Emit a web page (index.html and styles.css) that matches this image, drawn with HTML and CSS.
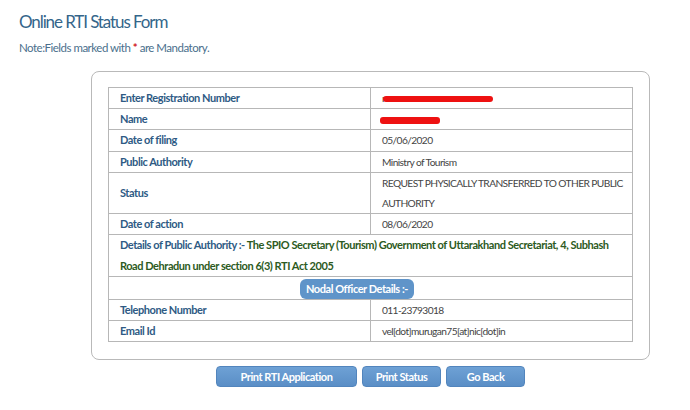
FILE: index.html
```html
<!doctype html>
<html>
  <head>
    <title>Online RTI Status Form</title>
    <link rel="stylesheet" href="styles.css">
  </head>

  <body>
    <div class="page">
      <h1 class="title">Online RTI Status Form</h1>
      <p class="note">Note:Fields marked with <span class="star">*</span> are Mandatory.</p>

      <div class="box">
        <table class="status">
          <tr>
            <td class="label">Enter Registration Number</td>
            <td class="value"><span class="hidden-text">r</span><span class="scribble scribble_long"></span></td>
          </tr>
          <tr>
            <td class="label">Name</td>
            <td class="value"><span class="scribble scribble_short"></span></td>
          </tr>
          <tr>
            <td class="label">Date of filing</td>
            <td class="value">05/06/2020</td>
          </tr>
          <tr>
            <td class="label">Public Authority</td>
            <td class="value">Ministry of Tourism</td>
          </tr>
          <tr>
            <td class="label">Status</td>
            <td class="value nowrap">REQUEST PHYSICALLY TRANSFERRED TO OTHER PUBLIC<br>AUTHORITY</td>
          </tr>
          <tr>
            <td class="label">Date of action</td>
            <td class="value">08/06/2020</td>
          </tr>
          <tr>
            <td class="label nowrap" colspan="2">Details of Public Authority :- <span class="details">The SPIO Secretary (Tourism) Government of Uttarakhand Secretariat, 4, Subhash<br>Road Dehradun under section 6(3) RTI Act 2005</span></td>
          </tr>
          <tr>
            <td class="nodal" colspan="2"><span class="nodal_btn">Nodal Officer Details :-</span></td>
          </tr>
          <tr>
            <td class="label">Telephone Number</td>
            <td class="value">011-23793018</td>
          </tr>
          <tr>
            <td class="label">Email Id</td>
            <td class="value">vel[dot]murugan75[at]nic[dot]in</td>
          </tr>
        </table>
      </div>

      <div class="actions">
        <button class="btn btn_wide">Print RTI Application</button>
        <button class="btn btn_status">Print Status</button>
        <button class="btn btn_back">Go Back</button>
      </div>
    </div>
  </body>
</html>
```

FILE: styles.css
```css
body {
  margin: 0;
  background-color: #fff;
  font-family: "Lato", sans-serif;
}

.page {
  padding: 10px 0 0 19px;
}

.title {
  margin: 0;
  font-size: 17px;
  font-weight: normal;
  line-height: 24px;
  letter-spacing: -1.1px;
  color: #34658a;
}

.note {
  margin: 7px 0 0 0;
  font-size: 11.5px;
  line-height: 14px;
  letter-spacing: -0.5px;
  color: #4a6f8c;
}

.star {
  color: #d0181e;
  font-weight: bold;
}

.box {
  width: 525px;
  margin: 16px 0 0 72px;
  padding: 15px 16px 17px 16px;
  border: 1px solid #b9b9b9;
  border-radius: 8px;
}

.status {
  width: 100%;
  border-collapse: collapse;
  table-layout: fixed;
  border: 1.5px solid #a9a9a9;
}

.status td {
  border: 1px solid #b7b7b7;
  padding: 0 11px;
  line-height: 20.2px;
  vertical-align: middle;
}

.nowrap {
  white-space: nowrap;
}

.label {
  font-size: 11px;
  font-weight: bold;
  letter-spacing: -0.45px;
  color: #2e5a84;
}

.value {
  font-size: 10.2px;
  letter-spacing: -0.6px;
  color: #444;
}

.details {
  color: #2c5a22;
}

.hidden-text {
  color: #333;
}

.scribble {
  display: inline-block;
  height: 6px;
  background-color: #ee1111;
  border-radius: 3px;
  vertical-align: middle;
}

.scribble_long {
  width: 110px;
  margin-left: -2px;
}

.scribble_short {
  width: 60px;
  margin-left: -2px;
  height: 7px;
}

.nodal {
  text-align: center;
  padding-right: 38px !important;
}

.nodal_btn {
  display: inline-block;
  padding: 0 6px;
  line-height: 20px;
  font-size: 11px;
  font-weight: bold;
  letter-spacing: -0.45px;
  color: #fff;
  background-color: #5f94c9;
  border-radius: 6px;
}

.actions {
  display: flex;
  gap: 5px;
  margin: 6px 0 0 197px;
}

.btn {
  height: 21px;
  padding: 0;
  font-family: "Lato", sans-serif;
  font-size: 11px;
  font-weight: bold;
  letter-spacing: -0.45px;
  color: #fff;
  background: linear-gradient(180deg, #6ea1d5 0%, #5a8ec6 100%);
  border: 1px solid #5285bd;
  border-radius: 4px;
}

.btn_wide {
  width: 141px;
}

.btn_status {
  width: 79px;
}

.btn_back {
  width: 79px;
}
```
